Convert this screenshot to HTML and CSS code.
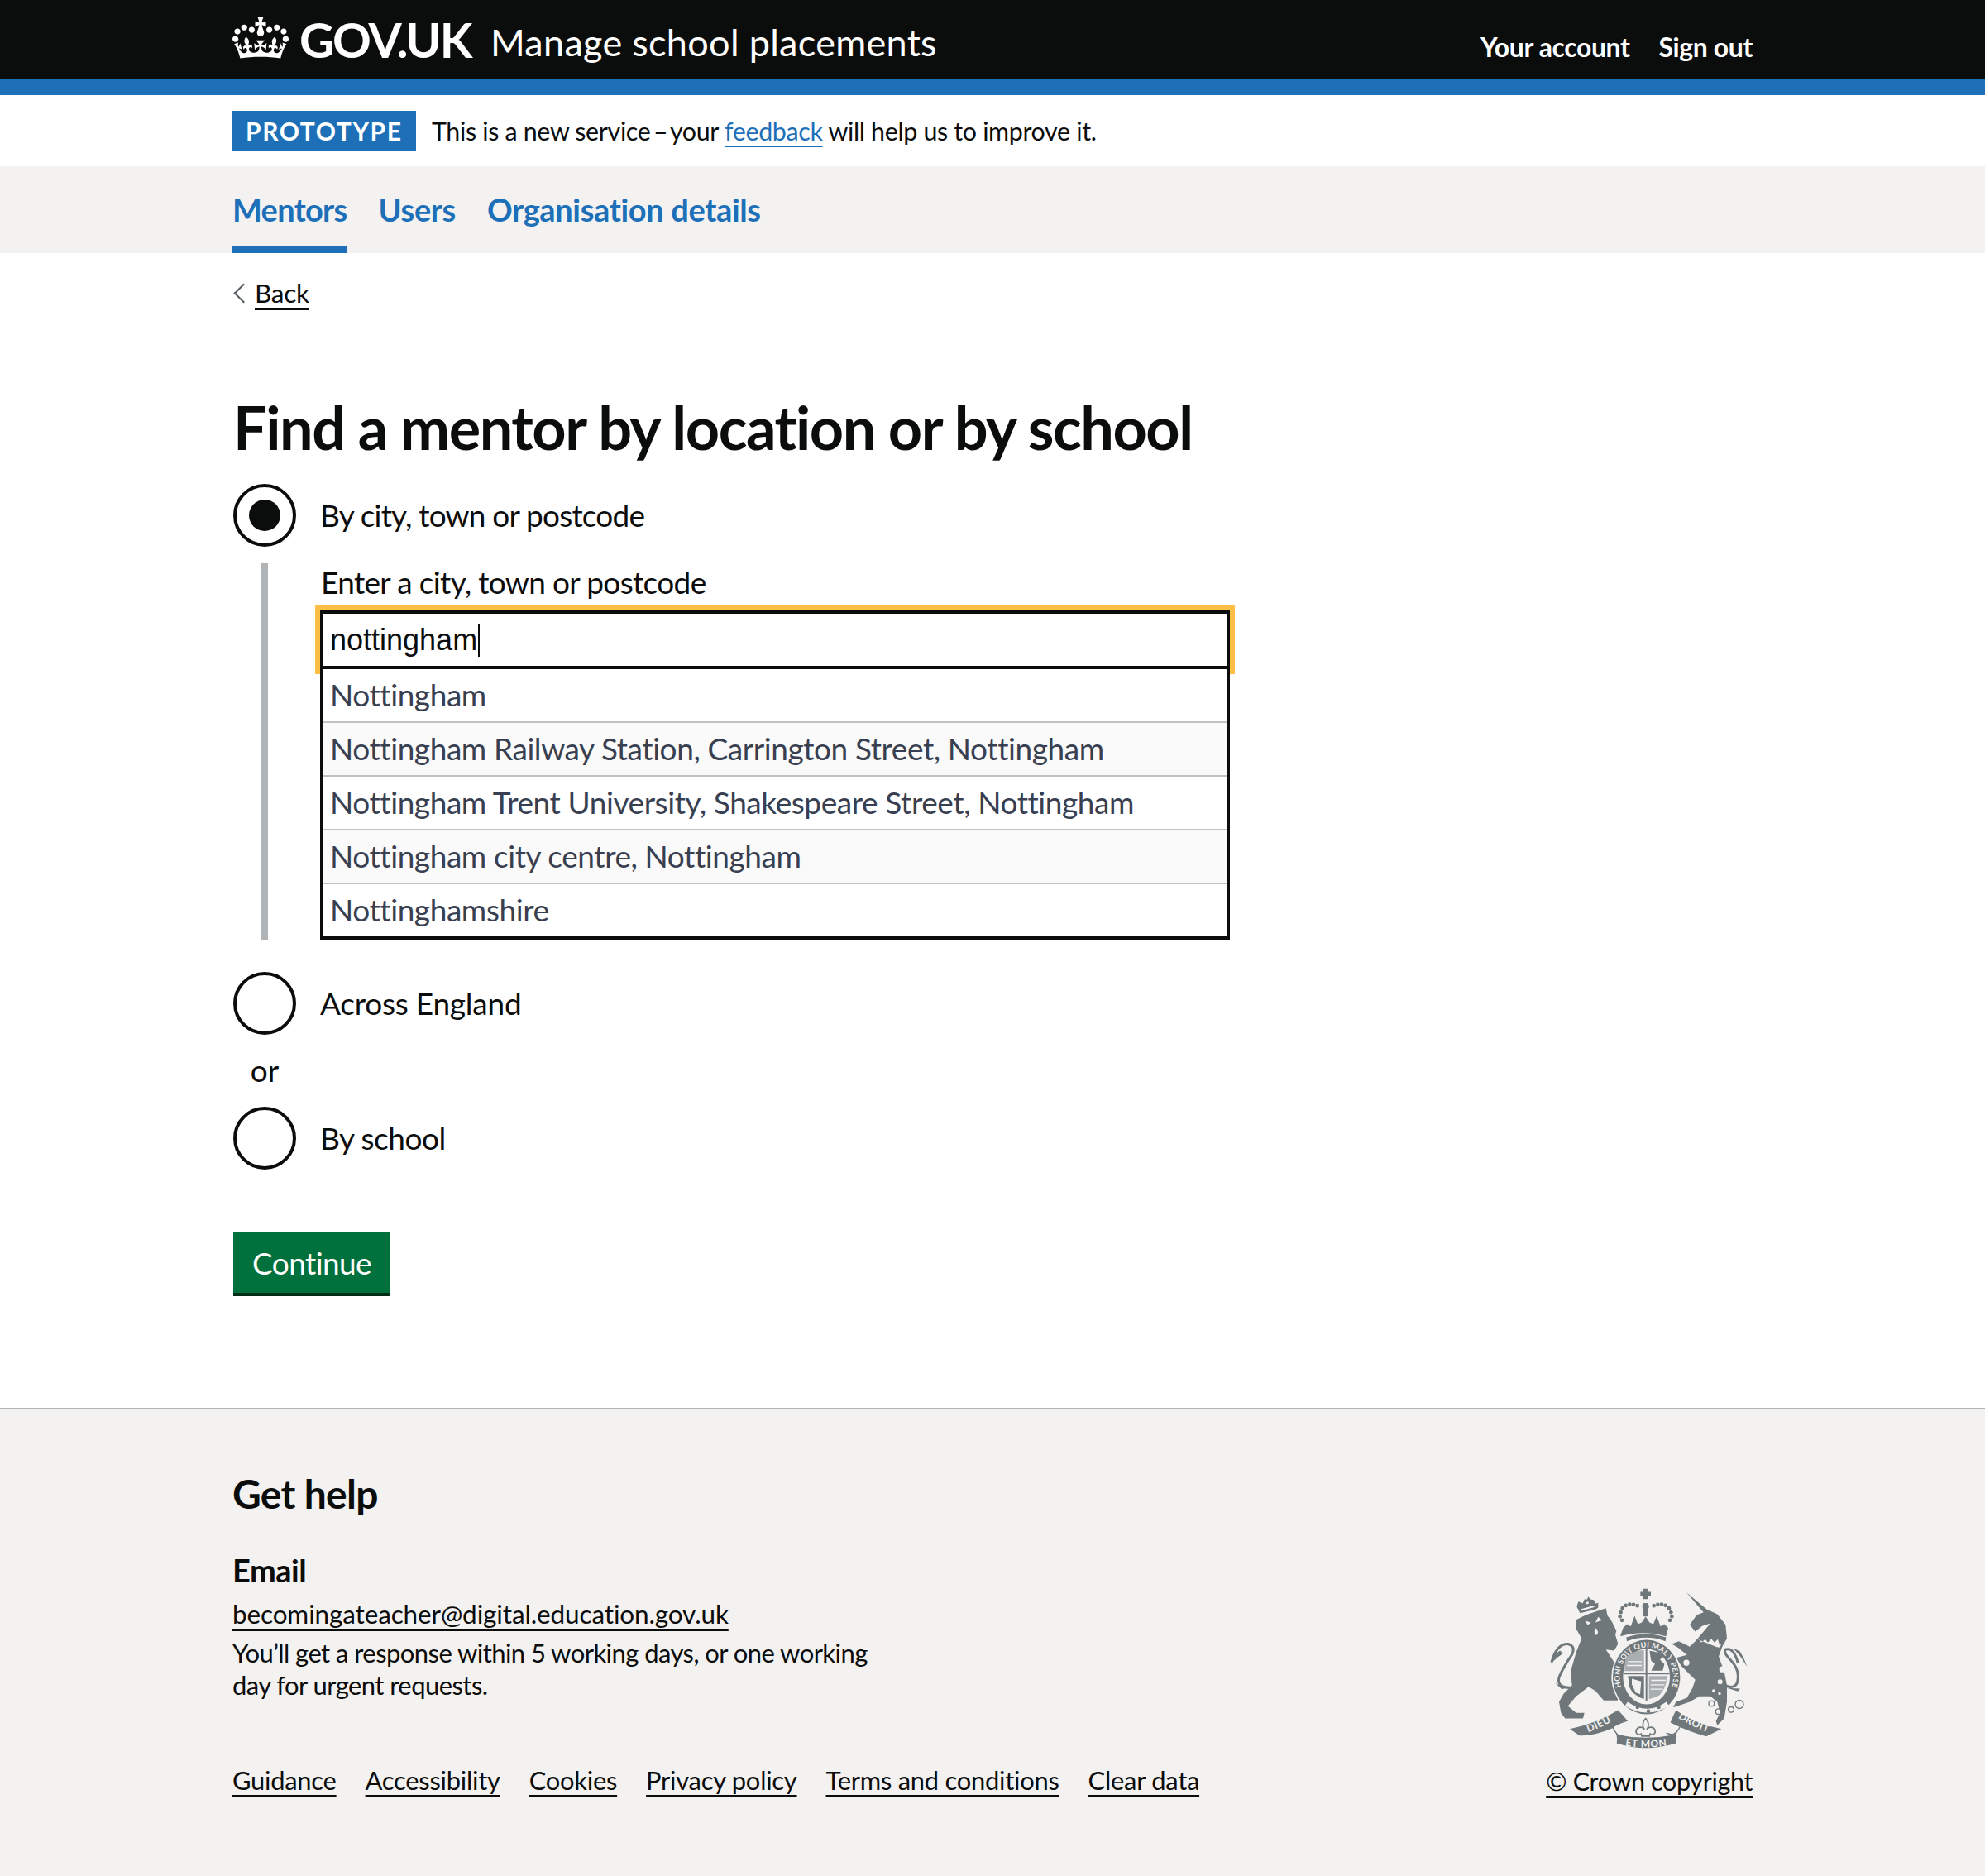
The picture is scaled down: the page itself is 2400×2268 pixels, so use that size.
FILE: index.html
```html
<!DOCTYPE html>
<html lang="en">
<head>
<meta charset="utf-8">
<title>Find a mentor by location or by school</title>
<link rel="stylesheet" href="styles.css">
</head>
<body>
<header class="header">
  <div class="wrap header-row">
    <div class="brand">
      <svg class="crown" viewBox="0 0 132 97" aria-hidden="true"><path fill="currentColor" fill-rule="evenodd" d="M25 30.2c3.5 1.5 7.7-.2 9.1-3.7 1.5-3.6-.2-7.8-3.9-9.2-3.6-1.4-7.6.3-9.1 3.9-1.4 3.5.3 7.5 3.9 9zM9 39.5c3.6 1.5 7.8-.2 9.2-3.7 1.5-3.6-.2-7.8-3.9-9.1-3.6-1.5-7.6.2-9.1 3.8-1.4 3.5.3 7.5 3.8 9zM4.4 57.2c3.5 1.5 7.7-.2 9.1-3.8 1.5-3.6-.2-7.7-3.9-9.1-3.5-1.5-7.6.3-9.1 3.8-1.4 3.5.3 7.6 3.9 9.1zm38.3-21.4c3.5 1.5 7.7-.2 9.1-3.8 1.5-3.6-.2-7.7-3.9-9.1-3.6-1.5-7.6.3-9.1 3.8-1.3 3.6.4 7.7 3.9 9.1zm64.4-5.6c-3.6 1.5-7.8-.2-9.1-3.7-1.5-3.6.2-7.8 3.8-9.2 3.6-1.4 7.7.3 9.2 3.9 1.3 3.5-.4 7.5-3.9 9zm15.9 9.3c-3.6 1.5-7.7-.2-9.1-3.7-1.5-3.6.2-7.8 3.7-9.1 3.6-1.5 7.7.2 9.2 3.8 1.5 3.5-.3 7.5-3.8 9zm4.7 17.7c-3.6 1.5-7.8-.2-9.2-3.8-1.5-3.6.2-7.7 3.9-9.1 3.6-1.5 7.7.3 9.2 3.8 1.3 3.5-.4 7.6-3.9 9.1zM89.3 35.8c-3.6 1.5-7.8-.2-9.2-3.8-1.4-3.6.2-7.7 3.9-9.1 3.6-1.5 7.7.3 9.2 3.8 1.4 3.6-.3 7.7-3.9 9.1zM69.7 17.7l8.9 4.7V9.3l-8.9 2.8c-.2-.3-.5-.6-.9-.9L72.4 0H59.6l3.5 11.2c-.3.3-.6.5-.9.9l-8.8-2.8v13.1l8.8-4.7c.3.3.6.7.9.9l-5 15.4v.1c-.2.8-.4 1.6-.4 2.4 0 4.1 3.1 7.5 7 8.1h.2c.3 0 .7.1 1 .1.4 0 .7 0 1-.1h.2c4-.6 7.1-4.1 7.1-8.1 0-.8-.1-1.7-.4-2.4V34l-5.1-15.4c.4-.2.7-.6 1-.9zM66 92.8c16.9 0 32.8 1.1 47.1 3.2 4-16.9 8.9-26.7 14-33.5l-9.6-3.4c1 4.9 1.1 7.2 0 10.2-1.5-1.4-3-4.3-4.2-8.7L108.6 76c2.8-2 5-3.2 7.5-3.3-4.4 9.4-10 11.9-13.6 11.2-4.3-.8-6.3-4.6-5.6-7.9 1-4.7 5.7-5.9 8-.5 4.3-8.7-3-11.4-7.6-8.8 7.1-7.2 7.9-13.5 2.1-21.1-8 6.1-8.1 12.3-4.5 20.8-4.7-5.4-12.1-2.5-9.5 6.2 3.4-5.2 7.9-2 7.2 3.1-.6 4.3-6.4 7.8-13.5 7.2-10.3-.9-10.9-8-11.2-13.8 2.5-.5 7.1 1.8 11 7.3L80.2 60c-4.1 4.4-8 5.3-12.3 5.4 1.4-4.4 8-11.6 8-11.6H55.5s6.4 7.2 7.9 11.6c-4.2-.1-8-1-12.3-5.4l1.4 16.4c3.9-5.5 8.5-7.7 10.9-7.3-.3 5.8-.9 12.8-11.1 13.8-7.2.6-12.9-2.9-13.5-7.2-.7-5 3.8-8.3 7.1-3.1 2.7-8.7-4.6-11.6-9.4-6.2 3.7-8.5 3.6-14.7-4.6-20.8-5.8 7.6-5 13.9 2.2 21.1-4.7-2.6-11.9.1-7.7 8.8 2.3-5.5 7.1-4.2 8.1.5.7 3.3-1.3 7.1-5.7 7.9-3.5.7-9-1.8-13.5-11.2 2.5.1 4.7 1.3 7.5 3.3l-4.7-15.4c-1.2 4.4-2.7 7.2-4.3 8.7-1.1-3-.9-5.3 0-10.2l-9.5 3.4c5 6.9 9.9 16.7 14 33.5 14.8-2.1 30.8-3.2 47.7-3.2z"/></svg>
      <span class="logotype">GOV.UK</span>
      <span class="service">Manage school placements</span>
    </div>
    <nav class="account">
      <a href="#">Your account</a>
      <a href="#">Sign out</a>
    </nav>
  </div>
</header>

<div class="wrap phase">
  <strong class="tag">PROTOTYPE</strong>
  <span class="phase-text">This is a new service <span class="dash">–</span> your <a href="#">feedback</a> will help us to improve it.</span>
</div>

<nav class="primary">
  <div class="wrap primary-row">
    <a class="primary-link is-active" href="#">Mentors</a>
    <a class="primary-link" href="#">Users</a>
    <a class="primary-link" href="#">Organisation details</a>
  </div>
</nav>

<main class="wrap main">
  <a class="back" href="#">Back</a>
  <h1 class="title">Find a mentor by location or by school</h1>

  <div class="radio">
    <span class="radio-mark is-checked"></span>
    <span class="radio-label">By city, town or postcode</span>
  </div>

  <div class="conditional">
    <label class="field-label">Enter a city, town or postcode</label>
    <div class="input">nottingham<span class="caret"></span></div>
    <ul class="menu">
      <li class="option">Nottingham</li>
      <li class="option is-odd">Nottingham Railway Station, Carrington Street, Nottingham</li>
      <li class="option">Nottingham Trent University, Shakespeare Street, Nottingham</li>
      <li class="option is-odd">Nottingham city centre, Nottingham</li>
      <li class="option">Nottinghamshire</li>
    </ul>
  </div>

  <div class="radio radio-second">
    <span class="radio-mark"></span>
    <span class="radio-label label-england">Across England</span>
  </div>
  <div class="divider">or</div>
  <div class="radio">
    <span class="radio-mark"></span>
    <span class="radio-label label-school">By school</span>
  </div>

  <button class="button" type="button">Continue</button>
</main>

<footer class="footer">
  <div class="wrap footer-row">
    <div class="footer-main">
      <h2 class="help-title">Get help</h2>
      <h3 class="help-sub">Email</h3>
      <a class="footer-link help-mail" href="#">becomingateacher@digital.education.gov.uk</a>
      <p class="help-text">You’ll get a response within 5 working days, or one working<br>day for urgent requests.</p>
      <div class="meta">
        <a class="footer-link" href="#">Guidance</a>
        <a class="footer-link" href="#">Accessibility</a>
        <a class="footer-link" href="#">Cookies</a>
        <a class="footer-link" href="#">Privacy policy</a>
        <a class="footer-link" href="#">Terms and conditions</a>
        <a class="footer-link" href="#">Clear data</a>
      </div>
    </div>
    <div class="footer-side">
      <svg class="crest" viewBox="340 118 720 590" aria-hidden="true">
        <defs>
          <path id="garter" d="M623 515A97 108 0 1 1 763 515"/>
          <path id="scrollL" d="M462 646Q520 630 585 590"/>
          <path id="scrollM" d="M600 686Q690 704 785 686"/>
          <path id="scrollR" d="M800 582Q850 618 925 644"/>
        </defs>
        <g class="crest-fill">
          <!-- royal crown -->
          <path d="M682 120h16v11h11v15h-11v11h-16v-11h-11v-15h11z"/>
          <path d="M680 172h20v48h-20z"/>
          <circle cx="690" cy="184" r="12"/>
          <circle cx="600" cy="205" r="7"/><circle cx="606" cy="190" r="7"/><circle cx="618" cy="180" r="7"/><circle cx="632" cy="176" r="7"/><circle cx="646" cy="177" r="7"/><circle cx="660" cy="181" r="7"/>
          <circle cx="720" cy="181" r="7"/><circle cx="734" cy="177" r="7"/><circle cx="748" cy="176" r="7"/><circle cx="762" cy="180" r="7"/><circle cx="775" cy="190" r="7"/><circle cx="782" cy="205" r="7"/>
          <circle cx="597" cy="220" r="7"/><circle cx="785" cy="220" r="7"/><circle cx="604" cy="234" r="7"/><circle cx="778" cy="234" r="7"/>
          <path d="M608 262l14-14 14 8 14-38 12 30 14-6 14-22 14 22 14 6 12-30 14 38 14-8 14 14-8 30q-84-24-166 0z"/>
          <path d="M620 296q70-24 144 0l-2 14q-70-26-140 0z"/>
          <!-- lion -->
          <path d="M438 232l36-18 72-24 6 28 12 14 20 40-4 14 10 34-14 24-30-4 32 50 12 28-20 22 24 60-6 25-25 0-25 0-30-35-25-15-45 35-30 35 30 25h30l-5 20h-65l-15-20-7-40 17-30 30-30-5-50 20-70 20-50-20-35z"/>
          <path class="crest-bg" d="M470 235l22 8-12 8zM518 222l14 12-24 8zM510 262c8 10 10 20 2 26-10-4-10-16-2-26z"/>
          <path class="crest-stroke" d="M425 478q-62 4-48-40 16-36 46-80 14-30-14-38-42-2-60 66"/>
          <path d="M345 392q8-32 34-48l12 10q-22 14-46 38zM362 462l24 22 16-4-20-8z"/>
          <!-- lion crown -->
          <path d="M452 208l-12-24 6-18 16 6 6-14 10 0 4-10 8 10 12 2 8 14 8-4 0 18-8 6z"/>
          <path class="crest-bg" d="M454 194l42-12 10 4-50 14zM474 168l8-2 2 8-8 2z"/>
          <!-- unicorn -->
          <path d="M838 133l74 62 38 17 30 38 5 50-17 30-13 35 20 55 10 50v60l-10 60-25 25-5-15 15-30-10-40-25-20h-40l-35 20-60 20 10-20 40-15 20-35 10-30-20-20-30-30-20-30 40-10-30-25-25-15 25-10 40 20 20-20 30-35 25-30-30 10-25 20-20-25 25-35 25-10z"/>
          <path class="crest-bg" d="M870 293l12 8 10 14 14-12 10 12 12-14 12 14 12-12 6 20 6-4-4 14-12-2-74-30z"/>
          <circle class="crest-bg" cx="851" cy="310" r="10"/><circle class="crest-bg" cx="838" cy="388" r="11"/><circle class="crest-bg" cx="968" cy="412" r="11"/><circle class="crest-bg" cx="960" cy="457" r="9"/><circle class="crest-bg" cx="937" cy="490" r="6"/><circle class="crest-bg" cx="958" cy="500" r="5"/>
          <path class="crest-stroke" d="M975 470q50 20 50-30 2-30-25-60-30-30-20-40 30-10 45 50"/>
          <path d="M1058 402l-24-36-26-30 24 10 16 30zM985 480l40 12 8-10z"/>
          <circle class="crest-ring" cx="929" cy="536" r="10"/><circle class="crest-ring" cx="954" cy="565" r="10"/><circle class="crest-ring" cx="1000" cy="558" r="10"/><circle class="crest-ring" cx="1030" cy="539" r="15"/>
          <!-- shield and garter -->
          <ellipse class="crest-gap" cx="693" cy="440" rx="127" ry="140"/>
          <ellipse cx="693" cy="440" rx="122" ry="135"/>
          <ellipse class="crest-bg" cx="693" cy="438" rx="85" ry="101"/>
          <path d="M610 424h166v6H610zM690 338h6v190h-6z"/>
          <path class="crest-hatch" d="M618 368q30-24 66-26v76h-70q-1-26 4-50zM702 436h68q-6 44-30 70-16 10-38 14z"/>
          <path d="M704 345q30 2 52 20l-14 12 16 16-6 24h-42l14-24-14-12zM626 436h58v84q-40-14-52-42z"/>
          <path class="crest-bg" d="M640 446l34 10-4 46-16-6-14-30z"/>
          <path class="crest-lines" d="M626 384h50M622 398h54M710 452h54M708 468h50M708 484h44"/>
          <path class="crest-bg" d="M625 530q70 50 140 0l10 14q-80 50-160 0z"/>
          <circle cx="660" cy="550" r="6"/><circle cx="700" cy="564" r="7"/><circle cx="738" cy="550" r="6"/>
          <!-- scrolls -->
          <path d="M415 628q95-18 175-68 20 20 35 40-35 10-55 25-70 30-120 27z"/>
          <path d="M575 630q15 20 10 50 105 35 215 0-5-30 10-50l-20 20q-100 20-200 0z"/>
          <path d="M780 605q10-25 20-45 70 50 165 68-35 17-55 27-60-15-130-50z"/>
          <path class="crest-stroke-thin" d="M570 620q20 45 40 30M815 620q-20 40-50 22"/>
          <path class="crest-fleur" d="M690 590c14 14 12 30 4 40 8-12 24-10 30 2 4 12-8 22-18 14l-2 8h-28l-2-8c-10 8-22-2-18-14 6-12 22-14 30-2-8-10-10-26 4-40z"/>
        </g>
        <g class="crest-text">
          <text class="crest-small"><textPath href="#garter" startOffset="50%">HONI SOIT QUI MAL Y PENSE</textPath></text>
          <text><textPath href="#scrollL" startOffset="50%">DIEU</textPath></text>
          <text><textPath href="#scrollM" startOffset="50%">ET MON</textPath></text>
          <text><textPath href="#scrollR" startOffset="50%">DROIT</textPath></text>
        </g>
      </svg>
      <a class="footer-link copyright" href="#">© Crown copyright</a>
    </div>
  </div>
</footer>
</body>
</html>
```

FILE: styles.css
```css
* { box-sizing: border-box; }
html, body { margin: 0; padding: 0; }
body {
  font-family: "Lato", "Noto Sans", sans-serif;
  color: #0b0c0c;
  background: #fff;
  font-size: 36px;
}
a { color: inherit; }
.wrap { width: 1838px; margin-left: 281px; }

/* header */
.header { background: #0b0c0c; color: #fff; border-bottom: 19px solid #1d70b8; height: 115px; }
.header-row { display: flex; justify-content: space-between; height: 96px; }
.brand { display: flex; align-items: flex-start; }
.crown { width: 68px; height: 50px; margin-top: 21px; color: #fff; }
.logotype { font-weight: 700; font-size: 58px; line-height: 96px; margin-left: 13px; letter-spacing: -2px; }
.service { font-size: 45px; line-height: 103px; margin-left: 23.5px; letter-spacing: 0.3px; }
.account { display: flex; gap: 35px; padding-top: 38px; }
.account a { color: #fff; text-decoration: none; font-weight: 700; font-size: 32px; line-height: 38px; letter-spacing: -0.4px; }

/* phase banner */
.phase { display: flex; align-items: center; height: 86px; }
.tag { background: #1d70b8; color: #fff; font-size: 30px; line-height: 48px; height: 48px; padding: 0 16px; letter-spacing: 1.6px; width: 222px; white-space: nowrap; }
.phase-text { margin-left: 19px; font-size: 30.4px; letter-spacing: -0.33px; }
.phase-text a { color: #1d70b8; text-underline-offset: 6px; text-decoration-thickness: 2px; }
.dash { margin: 0 -4px; }

/* primary nav */
.primary { background: #f3f2f1; height: 105px; }
.primary-row { display: flex; gap: 38px; }
.primary-link { display: block; height: 105px; line-height: 104px; color: #1d70b8; font-weight: 700; text-decoration: none; font-size: 38px; letter-spacing: -0.35px; }
.primary-link.is-active { border-bottom: 9px solid #1d70b8; letter-spacing: -0.7px; }

/* main */
.main { padding-top: 31px; }
.back { display: block; width: fit-content; position: relative; padding-left: 27px; font-size: 31.5px; line-height: 34px; text-underline-offset: 6px; letter-spacing: -0.3px; }
.back::before { content: ""; position: absolute; left: 5px; top: 9px; width: 15px; height: 15px; border-left: 2px solid #505a5f; border-bottom: 2px solid #505a5f; transform: rotate(45deg); }
.title { margin: 95px 0 19px; padding-left: 1px; font-size: 72px; line-height: 100px; font-weight: 700; letter-spacing: -1.45px; }

.radio { display: flex; align-items: center; height: 76px; }
.radio-second { margin-top: 39px; }
.radio-mark { display: flex; align-items: center; justify-content: center; width: 76px; height: 76px; margin-left: 1px; border: 4px solid #0b0c0c; border-radius: 50%; flex: none; }
.radio-mark.is-checked::after { content: ""; width: 38px; height: 38px; border-radius: 50%; background: #0b0c0c; }
.radio-label { margin-left: 29px; font-size: 37px; line-height: 38px; letter-spacing: -0.8px; }
.label-england { letter-spacing: -0.23px; }
.label-school { letter-spacing: -0.5px; }

.conditional { margin: 20px 0 0 35px; border-left: 8px solid #b1b4b6; padding-left: 63px; height: 455px; }
.field-label { display: block; padding-top: 4px; padding-left: 1px; font-size: 37px; line-height: 38px; letter-spacing: -0.65px; }
.input { margin-top: 15px; width: 1100px; height: 71px; border: 4px solid #0b0c0c; outline: 6px solid #ffbf47; background: #fff; padding-left: 8px; font-family: "Liberation Sans", Arial, sans-serif; font-size: 36px; line-height: 62px; display: flex; align-items: center; }
.caret { display: inline-block; width: 2px; height: 40px; background: #0b0c0c; margin-left: 1px; }
.menu { position: relative; list-style: none; margin: 0; padding: 0; width: 1100px; height: 327px; background: #fff; border: 4px solid #0b0c0c; border-top: 0; }
.option { height: 65px; padding-left: 8px; border-bottom: 2px solid #bfc1c3; color: #383f51; font-size: 37px; line-height: 62px; letter-spacing: -0.42px; }
.option:last-child { border-bottom: 0; height: 63px; }
.option.is-odd { background: #fafafa; }

.divider { width: 78px; margin-top: 24px; margin-bottom: 25px; text-align: center; font-size: 37px; line-height: 38px; }
.button { display: block; margin: 76px 0 0 1px; width: 190px; height: 77px; padding: 0 0 1px; border: 0; border-bottom: 4px solid #002d18; background: #00703c; color: #fff; font-family: inherit; font-size: 37px; letter-spacing: -0.6px; }

/* footer */
.footer { margin-top: 135px; background: #f3f2f1; border-top: 2px solid #b1b4b6; height: 566px; }
.footer-row { display: flex; justify-content: space-between; align-items: flex-end; height: 468px; }
.footer-main { display: flex; flex-direction: column; align-items: flex-start; }
.help-title { margin: 0; font-size: 48px; line-height: 54px; font-weight: 700; letter-spacing: -0.7px; }
.help-sub { margin: 44px 0 0; font-size: 38px; line-height: 42px; font-weight: 700; letter-spacing: -0.5px; }
.footer-link { font-size: 30.9px; line-height: 38px; text-underline-offset: 6px; letter-spacing: -0.25px; white-space: nowrap; }
.help-mail { margin-top: 13px; font-size: 31.5px; letter-spacing: -0.13px; }
.help-text { margin: 9px 0 0; font-size: 31px; line-height: 38.5px; letter-spacing: -0.56px; }
.meta { display: flex; gap: 35px; margin-top: 78px; }
.footer-side { display: flex; flex-direction: column; align-items: flex-end; }
.crest { width: 240px; height: 197px; margin: 0 6px 17px 0; }
.copyright { font-size: 30.4px; letter-spacing: -0.3px; }

.crest-fill { fill: #6f777b; }
.crest-fill .crest-bg { fill: #f3f2f1; }
.crest-fill .crest-gap { fill: #f3f2f1; }
.crest-fill .crest-stroke { fill: none; stroke: #6f777b; stroke-width: 9; }
.crest-fill .crest-stroke-thin { fill: none; stroke: #6f777b; stroke-width: 4; }
.crest-fill .crest-ring { fill: none; stroke: #6f777b; stroke-width: 4; }
.crest-fill .crest-hatch { fill: #a9aeb1; }
.crest-fill .crest-lines { fill: none; stroke: #f3f2f1; stroke-width: 4; }
.crest-fill .crest-fleur { fill: #f3f2f1; stroke: #6f777b; stroke-width: 5; }
.crest-text { fill: #f3f2f1; font-family: "Lato", sans-serif; font-size: 36px; font-weight: 700; text-anchor: middle; letter-spacing: 2px; }
.crest-text .crest-small { font-size: 27px; letter-spacing: 1px; }
```
